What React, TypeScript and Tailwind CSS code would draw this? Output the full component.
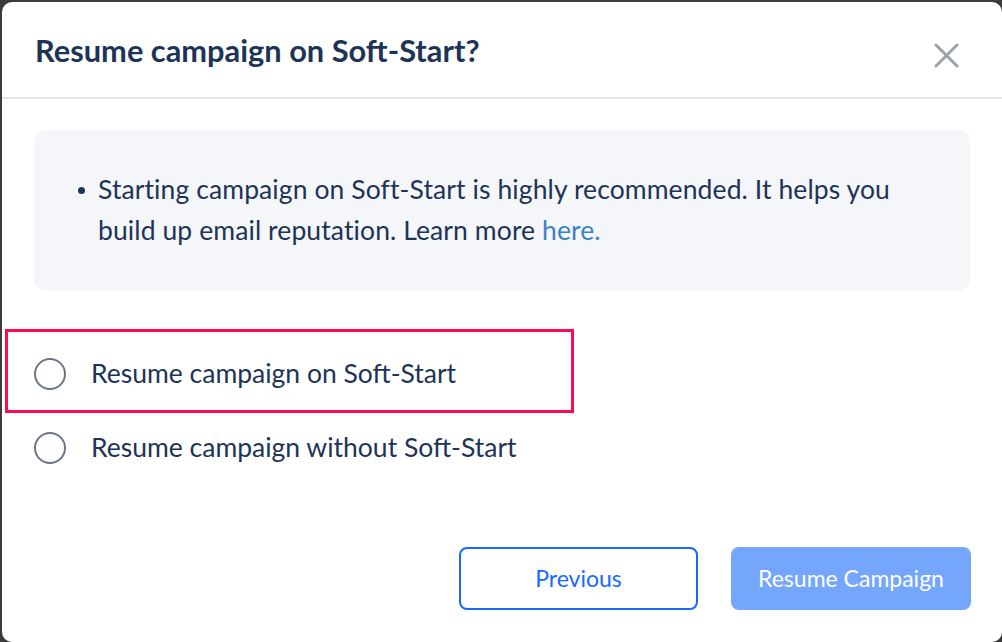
import React from 'react';

function Radio() {
  return <span className="block w-[32px] h-[32px] shrink-0 rounded-full border-2 border-[#6b7586] bg-white" />;
}

export default function App() {
  const font = { fontFamily: 'Lato, "Noto Sans", sans-serif' };

  return (
    <div className="w-[1002px] h-[642px] bg-[#3b3b3b] pt-[2px] pl-[2px] overflow-hidden" style={font}>
      <div className="w-[1000px] h-[640px] bg-white rounded-[10px] flex flex-col text-[#1d3457]">
        {/* Header */}
        <div className="h-[97px] shrink-0 border-b-2 border-[#e2e6eb] flex items-center justify-between pl-[33px] pr-[43px] pt-[4px]">
          <h2 className="text-[30.8px] font-bold">Resume campaign on Soft-Start?</h2>
          <button className="w-[26px] h-[26px] flex items-center justify-center mt-[8px]">
            <svg width="25" height="25" viewBox="0 0 25 25" fill="none" stroke="#9aa1ad" strokeWidth="3" strokeLinecap="round">
              <path d="M2 2L23 23M23 2L2 23" />
            </svg>
          </button>
        </div>

        {/* Info */}
        <div className="px-[32px] pt-[31px]">
          <div className="h-[160px] rounded-[10px] bg-[#f4f6f9] flex items-center pl-[44px]">
            <div className="flex items-start">
              <span className="w-[7px] h-[7px] rounded-full bg-[#1d3457] mt-[18px] mr-[13px] shrink-0" />
              <p className="text-[26.5px] leading-[41px] tracking-[0.1px]">
                Starting campaign on Soft-Start is highly recommended. It helps you
                <br />
                build up email reputation. Learn more <a className="text-[#3c82c6]">here.</a>
              </p>
            </div>
          </div>
        </div>

        {/* Options */}
        <div className="pl-[3px] mt-[39px]">
          <div className="w-[569px] h-[84px] border-[3px] border-[#ff0a50] flex items-center gap-[25px] pl-[26px] pt-[5px]">
            <Radio />
            <span className="text-[26.5px]">Resume campaign on Soft-Start</span>
          </div>
        </div>
        <div className="pl-[32px] mt-[15px] flex items-center gap-[25px]">
          <Radio />
          <span className="text-[26.5px]">Resume campaign without Soft-Start</span>
        </div>

        {/* Footer */}
        <div className="mt-auto flex justify-end gap-[33px] pr-[31px] pb-[32px]">
          <button className="w-[239px] h-[63px] rounded-[8px] border-2 border-[#1769ff] text-[#1769ff] text-[23px]">
            Previous
          </button>
          <button className="w-[240px] h-[63px] rounded-[8px] bg-[#74a6fc] text-white text-[23px]">
            Resume Campaign
          </button>
        </div>
      </div>
    </div>
  );
}
